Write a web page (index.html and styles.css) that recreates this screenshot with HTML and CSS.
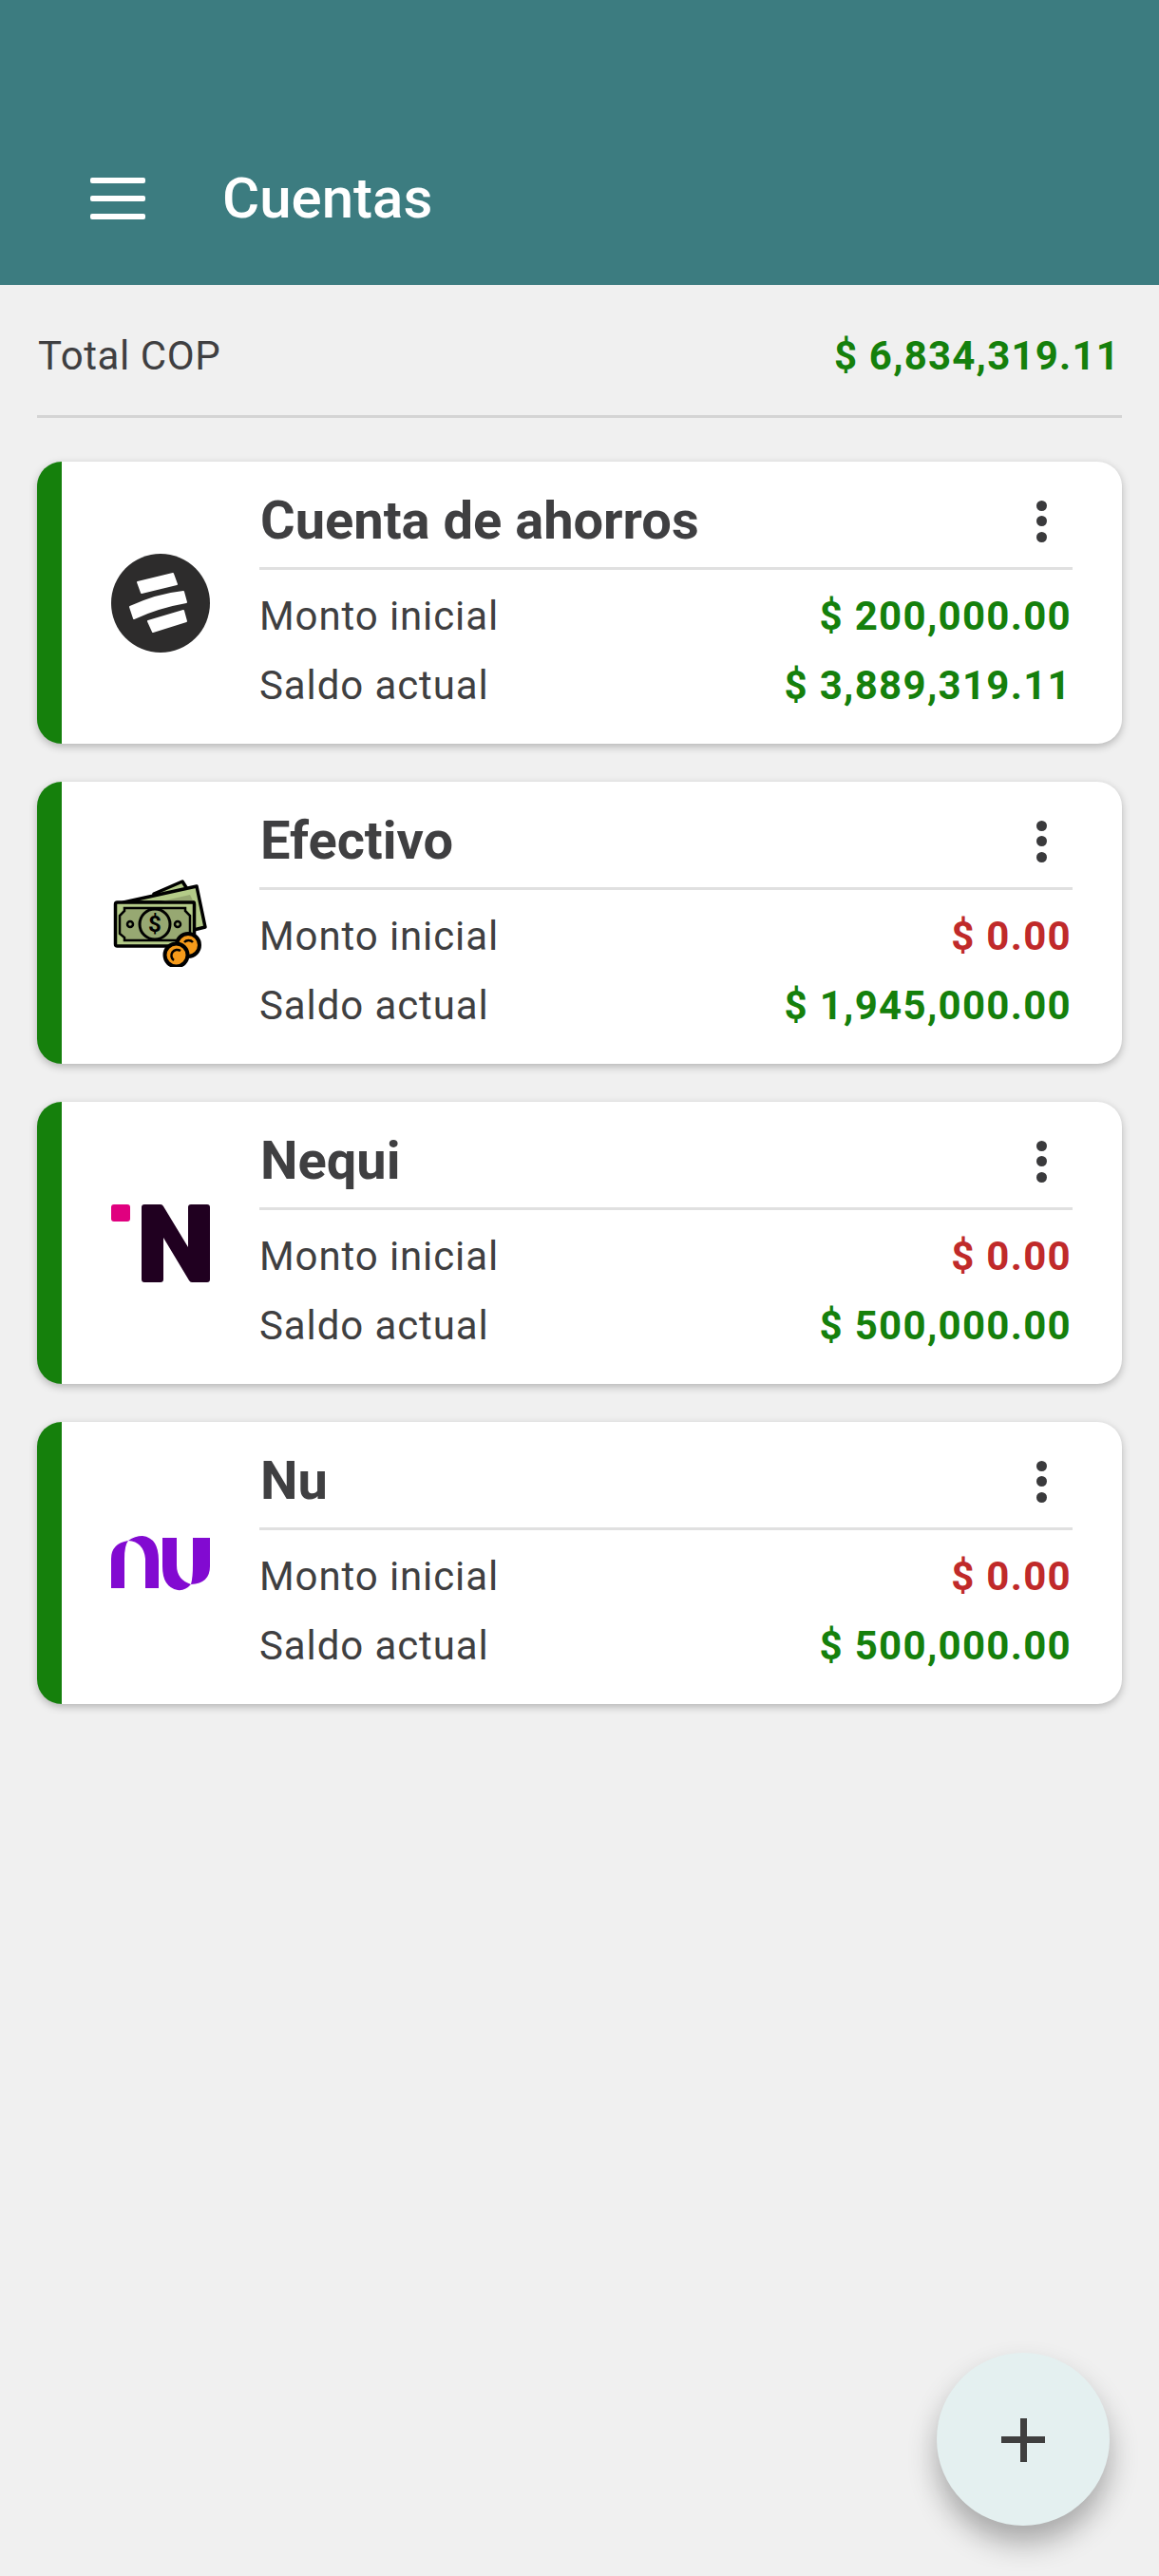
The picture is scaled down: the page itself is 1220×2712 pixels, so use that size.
FILE: index.html
```html
<!DOCTYPE html>
<html lang="es">

<head>
  <meta charset="UTF-8">
  <meta name="viewport" content="width=device-width, initial-scale=1.0">
  <title>Cuentas</title>
  <link rel="stylesheet" href="styles.css">
</head>

<body>
  <header class="app-bar">
    <div class="menu-icon"><span></span><span></span><span></span></div>
    <h1>Cuentas</h1>
  </header>

  <main class="content">
    <div class="total-row">
      <span>Total COP</span>
      <span class="amount positive">$ 6,834,319.11</span>
    </div>

    <section class="card">
      <div class="card-logo">
        <svg width="104" height="104" viewBox="0 0 104 104">
          <circle cx="52" cy="52" r="52" fill="#2d2c2c"/>
          <g fill="#fff" stroke="#fff" stroke-width="2" stroke-linejoin="round">
            <path d="M28 30 L65 21 L69 32 L32 41 Z"/>
            <path d="M20 56 Q48 43 76 40 L79 51 Q50 56 24 68 Z"/>
            <path d="M39 71 L76 60 L79 71 L44 82 Z"/>
          </g>
        </svg>
      </div>
      <div class="card-body">
        <div class="card-title"><h2>Cuenta de ahorros</h2><div class="more"><i></i><i></i><i></i></div></div>
        <div class="row"><span>Monto inicial</span><span class="amount positive">$ 200,000.00</span></div>
        <div class="row"><span>Saldo actual</span><span class="amount positive">$ 3,889,319.11</span></div>
      </div>
    </section>

    <section class="card">
      <div class="card-logo">
        <svg width="104" height="92" viewBox="-3 0 104 92">
          <path d="M42 15 L72 2 L79 13 L60 24 Z" fill="#b4cb88" stroke="#000" stroke-width="3.5" stroke-linejoin="round"/>
          <path d="M10 24 L87 7 L96 50 L84 53 V24 Z" fill="#b4cb88" stroke="#000" stroke-width="3.5" stroke-linejoin="round"/>
          <path d="M45 24 L80 16 L84 24 Z" fill="#97a872"/>
          <rect x="1.5" y="24" width="83" height="46" rx="2" fill="#b4cb88" stroke="#000" stroke-width="3.5"/>
          <path d="M11 30 H75 V33 L80 38 V57 L75 61 V64 H11 V61 L6 57 V38 L11 33 Z" fill="#97a872" stroke="#000" stroke-width="2.5"/>
          <circle cx="43" cy="47" r="16" fill="#97a872" stroke="#000" stroke-width="3"/>
          <circle cx="17" cy="47" r="3" fill="none" stroke="#000" stroke-width="2.5"/>
          <circle cx="67" cy="47" r="3" fill="none" stroke="#000" stroke-width="2.5"/>
          <text x="43" y="55" class="bill-sign">$</text>
          <circle cx="78" cy="69" r="12" fill="#f59a1a" stroke="#000" stroke-width="4"/>
          <path d="M74 66 A6 6 0 0 1 83 66" fill="none" stroke="#000" stroke-width="2.5"/>
          <circle cx="65.5" cy="79.5" r="12" fill="#f59a1a" stroke="#000" stroke-width="4"/>
          <path d="M63 85 A6 6 0 0 1 70 75" fill="none" stroke="#000" stroke-width="2.5"/>
        </svg>
      </div>
      <div class="card-body">
        <div class="card-title"><h2>Efectivo</h2><div class="more"><i></i><i></i><i></i></div></div>
        <div class="row"><span>Monto inicial</span><span class="amount negative">$ 0.00</span></div>
        <div class="row"><span>Saldo actual</span><span class="amount positive">$ 1,945,000.00</span></div>
      </div>
    </section>

    <section class="card">
      <div class="card-logo">
        <svg width="104" height="82" viewBox="0 0 104 82">
          <rect x="0" y="0" width="20" height="18" rx="3" fill="#e0007f"/>
          <path d="M32 3 Q32 0 35 0 H52 Q54 0 55 2 L81 45 V3 Q81 0 84 0 H101 Q104 0 104 3 V79 Q104 82 101 82 H85 Q83 82 82 80 L55 35 V79 Q55 82 52 82 H35 Q32 82 32 79 Z" fill="#200020"/>
        </svg>
      </div>
      <div class="card-body">
        <div class="card-title"><h2>Nequi</h2><div class="more"><i></i><i></i><i></i></div></div>
        <div class="row"><span>Monto inicial</span><span class="amount negative">$ 0.00</span></div>
        <div class="row"><span>Saldo actual</span><span class="amount positive">$ 500,000.00</span></div>
      </div>
    </section>

    <section class="card">
      <div class="card-logo">
        <svg width="104" height="58" viewBox="0 0 104 58">
          <g fill="#820ad1">
            <path d="M0 55 V24 Q0 8 18 5 Q14 10 14 24 V55 Z"/>
            <path d="M18 5 Q25 0 33 0 Q50 2 50 26 V55 H36 V24 Q34 6 18 5 Z"/>
            <path d="M54 2 H69 V31 Q69 46 84 51 Q78 58 70 57 Q54 54 54 32 Z"/>
            <path d="M86 2 H104 V32 Q104 50 84 51 Q86 44 86 30 Z"/>
          </g>
        </svg>
      </div>
      <div class="card-body">
        <div class="card-title"><h2>Nu</h2><div class="more"><i></i><i></i><i></i></div></div>
        <div class="row"><span>Monto inicial</span><span class="amount negative">$ 0.00</span></div>
        <div class="row"><span>Saldo actual</span><span class="amount positive">$ 500,000.00</span></div>
      </div>
    </section>
  </main>

  <div class="fab"><span class="fab-h"></span><span class="fab-v"></span></div>
</body>

</html>
```

FILE: styles.css
```css
* {
  box-sizing: border-box;
}

body {
  margin: 0;
  height: 2712px;
  background: #f0f0f0;
  color: #3f3f41;
  font-family: Roboto, "Liberation Sans", sans-serif;
  overflow: hidden;
}

.app-bar {
  height: 300px;
  background: #3c7c80;
  color: #fff;
  display: flex;
  align-items: center;
  padding: 117px 0 0 95px;
}

.app-bar h1 {
  margin: 0 0 0 81px;
  font-size: 60px;
  font-weight: 500;
}

.menu-icon {
  width: 58px;
  display: flex;
  flex-direction: column;
  gap: 13px;
}

.menu-icon span {
  height: 6px;
  background: #fff;
  border-radius: 2px;
}

.content {
  padding: 0 39px;
}

.total-row {
  height: 140px;
  border-bottom: 3px solid #d4d4d4;
  margin-bottom: 46px;
  padding: 11px 2px 0 1px;
  display: flex;
  justify-content: space-between;
  align-items: center;
  font-size: 42px;
  letter-spacing: 0.6px;
}

.total-row .amount {
  font-size: 42px;
  letter-spacing: 1.2px;
}

.amount {
  font-weight: 700;
  letter-spacing: 1.3px;
}

.positive {
  color: #15800c;
}

.negative {
  color: #c02a2a;
}

.card {
  height: 297px;
  margin-bottom: 40px;
  display: flex;
  background: #fff;
  border-left: 26px solid #15800c;
  border-radius: 26px;
  box-shadow: 0 3px 8px rgba(0, 0, 0, 0.25);
}

.card-logo {
  width: 208px;
  padding-left: 52px;
  display: flex;
  align-items: center;
}

.card-logo svg {
  display: block;
}

.bill-sign {
  font-family: Roboto, sans-serif;
  font-size: 24px;
  font-weight: 700;
  text-anchor: middle;
}

.card-body {
  flex: 1;
  margin-right: 52px;
}

.card-title {
  height: 114px;
  padding-top: 12px;
  margin-bottom: 12px;
  border-bottom: 3px solid #e0e0e0;
  display: flex;
  justify-content: space-between;
  align-items: center;
}

.card-title h2 {
  margin: 0;
  font-size: 56px;
  font-weight: 700;
  padding-left: 1px;
}

.more {
  margin-right: 27px;
  margin-top: 2px;
  display: flex;
  flex-direction: column;
  gap: 5.5px;
}

.more i {
  display: block;
  width: 11px;
  height: 11px;
  border-radius: 50%;
  background: #3a3a3c;
}

.row {
  height: 73px;
  padding: 0 1px 0 0;
  display: flex;
  justify-content: space-between;
  align-items: center;
  font-size: 42px;
  letter-spacing: 0.9px;
}

.fab {
  position: absolute;
  left: 986px;
  top: 2477px;
  width: 182px;
  height: 182px;
  border-radius: 50%;
  background: #e4f0f0;
  box-shadow: 0 18px 30px rgba(0, 0, 0, 0.3);
}

.fab-h {
  position: absolute;
  left: 68px;
  top: 88px;
  width: 46px;
  height: 7px;
  background: #3f3f3f;
}

.fab-v {
  position: absolute;
  left: 88px;
  top: 69px;
  width: 7px;
  height: 46px;
  background: #3f3f3f;
}
```
